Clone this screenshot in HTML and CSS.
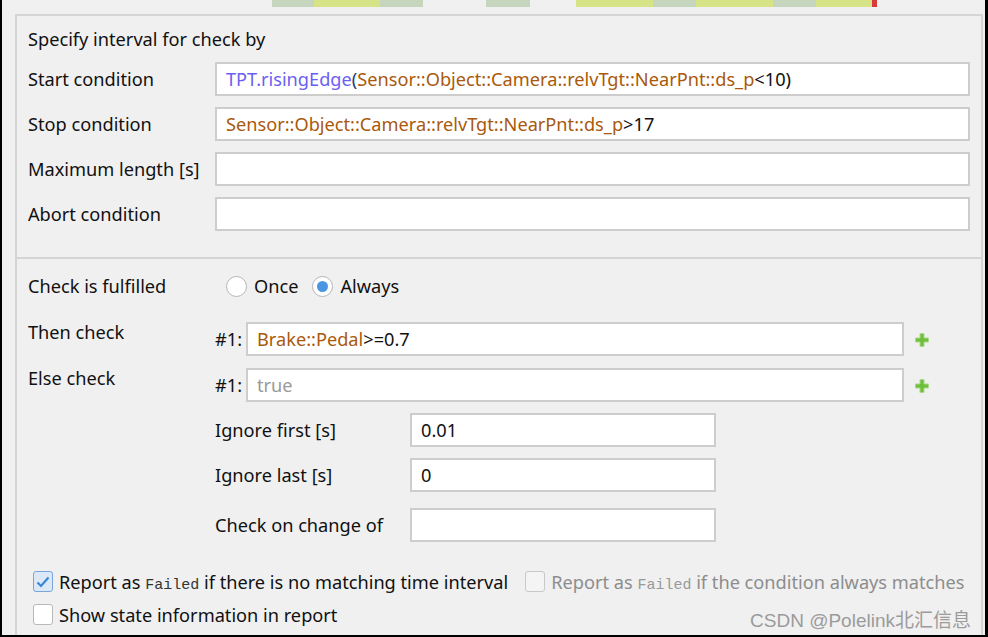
FILE: index.html
```html
<!DOCTYPE html>
<html>
<head>
<meta charset="utf-8">
<link rel="stylesheet" href="styles.css">
</head>
<body>
<div class="window">
  <div class="strip">
    <span class="seg g w42" ></span><span class="seg y w66"></span><span class="seg g w43"></span><span class="gap w63"></span><span class="seg g w44"></span><span class="gap w46"></span><span class="seg y w77"></span><span class="seg g w43"></span><span class="seg y w77"></span><span class="seg g w43"></span><span class="seg y w56"></span><span class="seg r w5"></span>
  </div>
  <div class="panel">
    <section class="sec1">
      <div class="title">Specify interval for check by</div>
      <div class="form1">
        <div class="lbl">Start condition</div>
        <div class="field"><span class="fn">TPT.risingEdge</span><span class="par">(</span><span class="sig">Sensor::Object::Camera::relvTgt::NearPnt::ds_p</span>&lt;10)</div>
        <div class="lbl">Stop condition</div>
        <div class="field"><span class="sig">Sensor::Object::Camera::relvTgt::NearPnt::ds_p</span>&gt;17</div>
        <div class="lbl">Maximum length [s]</div>
        <div class="field"></div>
        <div class="lbl">Abort condition</div>
        <div class="field"></div>
      </div>
    </section>
    <section class="sec2">
      <div class="radio-row">
        <div class="lbl rlabel">Check is fulfilled</div>
        <span class="radio"></span><span class="rtext">Once</span>
        <span class="radio on"></span><span class="rtext">Always</span>
      </div>
      <div class="checks">
        <div class="lbl clabel">Then check</div>
        <div class="num">#1:</div>
        <div class="field"><span class="sig">Brake::Pedal</span>&gt;=0.7</div>
        <div class="plus"><svg width="14" height="14" viewBox="0 0 14 14"><path d="M5 0.5h4v4.5h4.5v4h-4.5v4.5h-4v-4.5h-4.5v-4h4.5z" fill="#6fbf3c" stroke="#a9d98a" stroke-width="1"/></svg></div>
        <div class="lbl clabel">Else check</div>
        <div class="num">#1:</div>
        <div class="field ph">true</div>
        <div class="plus"><svg width="14" height="14" viewBox="0 0 14 14"><path d="M5 0.5h4v4.5h4.5v4h-4.5v4.5h-4v-4.5h-4.5v-4h4.5z" fill="#6fbf3c" stroke="#a9d98a" stroke-width="1"/></svg></div>
      </div>
      <div class="ignore">
        <div class="lbl">Ignore first [s]</div>
        <div class="field">0.01</div>
        <div class="lbl">Ignore last [s]</div>
        <div class="field">0</div>
        <div class="lbl">Check on change of</div>
        <div class="field"></div>
      </div>
      <div class="cb-row">
        <span class="cb on"><svg width="14" height="12" viewBox="0 0 14 12"><path d="M1.5 6.5l3.5 3.5l7.5-8.5" fill="none" stroke="#3a86d6" stroke-width="2.2"/></svg></span>
        <span class="cbtext">Report as <code>Failed</code> if there is no matching time interval</span>
        <span class="cb dis"></span>
        <span class="cbtext dis-text">Report as <code>Failed</code> if the condition always matches</span>
      </div>
      <div class="cb-row second">
        <span class="cb"></span>
        <span class="cbtext">Show state information in report</span>
      </div>
    </section>
  </div>
  <div class="watermark">CSDN @Polelink北汇信息</div>
</div>
</body>
</html>
```
FILE: styles.css
```css
* { box-sizing: border-box; }
html, body { margin: 0; padding: 0; background: #000; }
body {
  font-family: "Noto Sans", "Noto Sans CJK SC", sans-serif;
  font-size: 18.2px;
  color: #111;
}
.window {
  position: relative;
  width: 988px;
  height: 637px;
  background: #f0f0f0;
  border-left: 2px solid #000;
  border-right: 3px solid #000;
  border-bottom: 2px solid #000;
  padding: 0 2px 0 13px;
  display: flex;
  flex-direction: column;
}
.strip {
  display: flex;
  height: 7px;
  flex: none;
  margin: 0 0 7px 257px;
}
.seg { height: 7px; display: block; }
.gap { display: block; }
.g { background: #c6d5bd; }
.y { background: #d6e386; }
.r { background: #d83a3a; }
.w42 { width: 42px; } .w66 { width: 66px; } .w43 { width: 43px; }
.w63 { width: 63px; } .w44 { width: 44px; } .w46 { width: 46px; }
.w77 { width: 77px; } .w56 { width: 56px; } .w5 { width: 5px; }
.panel {
  flex: 1;
  border: 2px solid #d5d5d5;
  border-bottom: none;
  display: flex;
  flex-direction: column;
}
.sec1 {
  padding: 11px 11px 26px 11px;
  border-bottom: 2px solid #d5d5d5;
}
.title { height: 24px; line-height: 24px; margin-bottom: 11px; }
.form1 {
  display: grid;
  grid-template-columns: 187px 1fr;
  grid-auto-rows: 34px;
  row-gap: 11px;
}
.lbl { line-height: 34px; white-space: nowrap; }
.field {
  background: #fff;
  border: 2px solid #cdcdcd;
  height: 34px;
  line-height: 30px;
  padding: 0 9px;
  white-space: nowrap;
  overflow: hidden;
  color: #111;
}
.fn { color: #6a5ff2; }
.par { color: #1a3a7a; }
.sig { color: #a9590b; }
.ph { color: #9a9a9a; }
.sec2 {
  padding: 16px 11px 0 11px;
  display: flex;
  flex-direction: column;
}
.radio-row {
  display: flex;
  align-items: center;
  height: 22px;
}
.rlabel { width: 198px; line-height: 22px; }
.radio {
  width: 21px; height: 21px;
  border-radius: 50%;
  border: 1.5px solid #b5b5b5;
  background: #fff;
  display: inline-flex;
  align-items: center;
  justify-content: center;
  margin-right: 7px;
}
.radio.on::after {
  content: "";
  width: 11px; height: 11px;
  border-radius: 50%;
  background: #4a96e0;
}
.rtext { margin-right: 14px; }
.checks {
  margin-top: 25px;
  display: grid;
  grid-template-columns: 187px 31px 658px 1fr;
  grid-auto-rows: 34px;
  row-gap: 12px;
}
.clabel { line-height: 20px; }
.num { line-height: 34px; }
.plus { display: flex; align-items: center; padding-left: 11px; padding-top: 1px; }
.ignore {
  margin-top: 11px;
  margin-left: 187px;
  display: grid;
  grid-template-columns: 195px 306px;
  grid-template-rows: 34px 34px 39px;
  row-gap: 11px;
}
.ignore > :nth-child(5), .ignore > :nth-child(6) { align-self: end; }
.cb-row {
  margin-top: 29px;
  padding-left: 5px;
  display: flex;
  align-items: center;
  height: 21px;
  flex: none;
}
.cb-row.second { margin-top: 12px; }
.cb {
  width: 20px; height: 21px;
  border: 1.5px solid #b9b9b9;
  border-radius: 3px;
  background: #fff;
  display: inline-flex;
  align-items: center;
  justify-content: center;
  margin-right: 6px;
  flex: none;
}
.cb.on { border-color: #77a6dc; background: #dce8f6; }
.cb.dis { border-color: #c8c8c8; background: #f4f4f4; margin-left: 17px; }
.cbtext { white-space: nowrap; }
.dis-text { color: #8d8d8d; }
code { font-family: "Liberation Mono", monospace; font-size: 15px; color: #333; }
.dis-text code { color: #999; }
.watermark {
  position: absolute;
  right: 14px;
  bottom: 3px;
  color: #9b9b9b;
  font-size: 19px;
  font-family: "Liberation Sans", "Noto Sans CJK SC", sans-serif;
}
```
